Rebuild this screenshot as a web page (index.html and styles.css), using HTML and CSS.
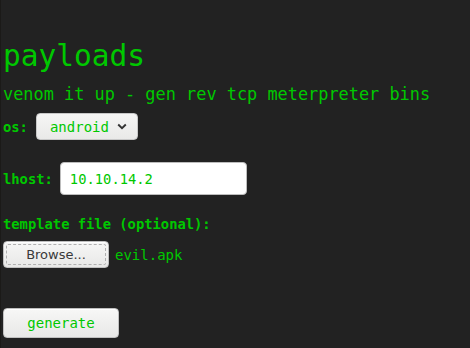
FILE: index.html
```html
<!DOCTYPE html>
<html lang="en">
  <head>
    <meta charset="UTF-8" />
    <title>payloads</title>
    <link rel="stylesheet" href="styles.css">
  </head>
  <body>
    <div class="page">
      <h1 class="title">payloads</h1>
      <p class="sub">venom it up - gen rev tcp meterpreter bins</p>
      <form class="gen">
        <div class="row row-os">
          <label class="lbl">os:</label>
          <div class="select">
            <span>android</span>
            <svg width="10" height="7" viewBox="0 0 10 7"><path d="M1.2 1.5 L5 5.2 L8.8 1.5" fill="none" stroke="#333" stroke-width="1.9"/></svg>
          </div>
        </div>
        <div class="row row-host">
          <label class="lbl">lhost:</label>
          <div class="input">10.10.14.2</div>
        </div>
        <label class="lbl lbl-block">template file (optional):</label>
        <div class="row row-file">
          <div class="btn browse"><span class="focus">Browse...</span></div>
          <span class="fname">evil.apk</span>
        </div>
        <div class="btn generate">generate</div>
      </form>
    </div>
  </body>
</html>
```

FILE: styles.css
```css
* {
  margin: 0;
  padding: 0;
  box-sizing: border-box;
}
html, body {
  background: #222222;
  height: 100%;
}
body {
  border-left: 1px solid #1b1a18;
  font-family: "DejaVu Sans Mono", monospace;
  color: #00c800;
}
.page {
  padding: 0 0 0 2px;
}
.title {
  font-size: 29.5px;
  font-weight: normal;
  line-height: 34px;
  padding-top: 39px;
}
.sub {
  font-size: 16.9px;
  line-height: 20px;
  margin-top: 11px;
}
.row {
  display: flex;
  align-items: center;
}
.lbl {
  font-size: 13.8px;
  font-weight: bold;
}
.row-os {
  margin-top: 9px;
  gap: 8px;
}
.select {
  display: flex;
  align-items: center;
  gap: 8px;
  width: 102px;
  height: 27px;
  padding-left: 13px;
  border: 1px solid #c8c8c8;
  border-radius: 4px;
  background: linear-gradient(#f6f6f5, #e9e9e8);
  font-size: 14px;
}
.row-host {
  margin-top: 22px;
  gap: 7px;
}
.input {
  width: 187px;
  height: 33px;
  padding: 8px 0 0 9px;
  border: 1px solid #bdbdbd;
  border-radius: 4px;
  background: #ffffff;
  font-size: 13.8px;
}
.lbl-block {
  display: block;
  margin-top: 21px;
}
.row-file {
  margin-top: 9px;
  gap: 6px;
}
.btn {
  border: 1px solid #c0c0c0;
  border-radius: 4px;
  background: linear-gradient(#f7f7f6, #e8e8e7);
  box-shadow: 0 1px 0 #ffffff inset;
}
.browse {
  width: 106px;
  height: 27px;
  padding: 2px;
  font-family: "DejaVu Sans", sans-serif;
  font-size: 13px;
  color: #3a3a3a;
}
.focus {
  display: flex;
  align-items: center;
  justify-content: center;
  height: 100%;
  border: 1px dashed #b0b0b0;
  border-radius: 2px;
}
.fname {
  font-size: 14px;
}
.generate {
  display: flex;
  align-items: center;
  justify-content: center;
  width: 116px;
  height: 30px;
  margin-top: 40px;
  font-size: 14px;
}
```
